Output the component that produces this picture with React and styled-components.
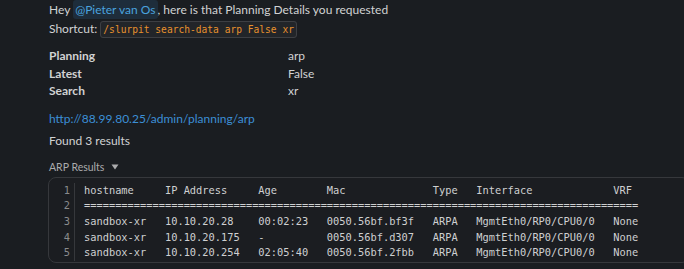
import React from "react";
import styled, { createGlobalStyle } from "styled-components";

const GlobalStyle = createGlobalStyle`
    html, body {
        margin: 0;
        padding: 0;
        background: #1a1d21;
        overflow: hidden;
    }
`;

const fields = [
    { label: "Planning", value: "arp" },
    { label: "Latest", value: "False" },
    { label: "Search", value: "xr" },
];

const columns = [
    { title: "hostname", width: 13 },
    { title: "IP Address", width: 15 },
    { title: "Age", width: 11 },
    { title: "Mac", width: 17 },
    { title: "Type", width: 7 },
    { title: "Interface", width: 22 },
    { title: "VRF", width: 4 },
];

const rows = [
    ["sandbox-xr", "10.10.20.28", "00:02:23", "0050.56bf.bf3f", "ARPA", "MgmtEth0/RP0/CPU0/0", "None"],
    ["sandbox-xr", "10.10.20.175", "-", "0050.56bf.d307", "ARPA", "MgmtEth0/RP0/CPU0/0", "None"],
    ["sandbox-xr", "10.10.20.254", "02:05:40", "0050.56bf.2fbb", "ARPA", "MgmtEth0/RP0/CPU0/0", "None"],
];

// pad each cell to its column width like tabulate output
const formatRow = (cells) =>
    cells
        .map((c, i) => (i === cells.length - 1 ? c : c.padEnd(columns[i].width)))
        .join("");

const lines = [
    formatRow(columns.map((c) => c.title)),
    "=".repeat(89),
    ...rows.map(formatRow),
];

export default function App() {
    return (
        <>
            <GlobalStyle />
            <Message>
                <Line>
                    Hey <Mention>@Pieter van Os</Mention>, here is that Planning
                    Details you requested
                </Line>
                <Line>
                    Shortcut: <InlineCode>/slurpit search-data arp False xr</InlineCode>
                </Line>

                <Fields>
                    {fields.map((f) => (
                        <React.Fragment key={f.label}>
                            <FieldLabel>{f.label}</FieldLabel>
                            <FieldValue>{f.value}</FieldValue>
                        </React.Fragment>
                    ))}
                </Fields>

                <Link href="#">http://88.99.80.25/admin/planning/arp</Link>

                <Found>Found 3 results</Found>

                <SnippetTitle>
                    ARP Results
                    <svg width="8" height="6" viewBox="0 0 8 6">
                        <path d="M0.5 0.5 L7.5 0.5 L4 5.5 Z" fill="#ababad" />
                    </svg>
                </SnippetTitle>

                <CodeBlock>
                    <Gutter>
                        {lines.map((_, i) => (
                            <div key={i}>{i + 1}</div>
                        ))}
                    </Gutter>
                    <CodeBody>
                        {lines.map((l, i) => (
                            <div key={i}>{l}</div>
                        ))}
                    </CodeBody>
                </CodeBlock>
            </Message>
        </>
    );
}

const Message = styled.div`
    padding: 0 0 0 49px;
    font-family: Lato, "Noto Sans", sans-serif;
    font-size: 12px;
    color: #d1d2d3;
`;

const Line = styled.div`
    height: 19px;
    line-height: 19px;
`;

const Mention = styled.span`
    background: #1e2d3b;
    color: #4aa3df;
    border-radius: 3px;
    padding: 2px 2px;
`;

const InlineCode = styled.code`
    font-family: "DejaVu Sans Mono", monospace;
    font-size: 9.6px;
    line-height: 12px;
    color: #e8912d;
    background: #222529;
    border: 1px solid #3d3f43;
    border-radius: 3px;
    padding: 2px 2px;
`;

const Fields = styled.div`
    display: grid;
    grid-template-columns: 239px auto;
    margin-top: 9px;
    line-height: 17.5px;
`;

const FieldLabel = styled.div`
    font-weight: 700;
`;

const FieldValue = styled.div``;

const Link = styled.a`
    display: block;
    margin-top: 9px;
    color: #3c8fd6;
    text-decoration: none;
    line-height: 19px;
`;

const Found = styled.div`
    margin-top: 3px;
    line-height: 19px;
`;

const SnippetTitle = styled.div`
    display: flex;
    align-items: center;
    gap: 7px;
    margin-top: 8px;
    font-size: 10.5px;
    color: #ababad;
    line-height: 18px;
`;

const CodeBlock = styled.div`
    display: flex;
    width: 640px;
    margin: 1px 0 0 -1px;
    border: 1px solid #36383c;
    border-radius: 8px;
    background: #1b1d21;
    font-family: "DejaVu Sans Mono", monospace;
    font-size: 10.35px;
    line-height: 15.67px;
    padding: 5px 0 1px;
`;

const Gutter = styled.div`
    width: 26px;
    padding-right: 4px;
    text-align: right;
    color: #8a8b8d;
    border-right: 1px solid #36383c;
    box-sizing: border-box;
`;

const CodeBody = styled.div`
    padding-left: 9px;
    color: #cfd0d1;
    white-space: pre;
`;
